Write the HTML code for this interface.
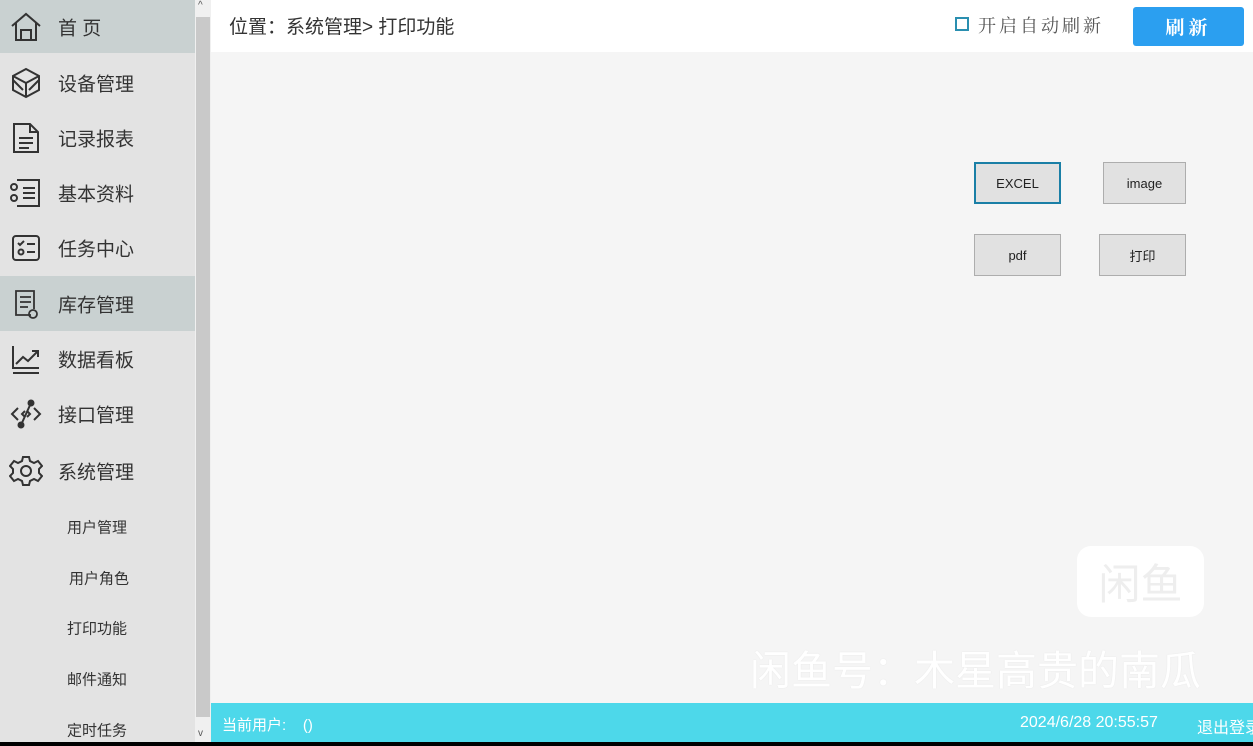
<!DOCTYPE html>
<html><head><meta charset="utf-8"><style>
*{margin:0;padding:0;box-sizing:border-box}
body{width:1253px;height:746px;overflow:hidden;background:#000;font-family:"Liberation Sans","Noto Sans CJK SC",sans-serif;position:relative}
.side{position:absolute;left:0;top:0;width:195px;height:742px;background:#e3e3e3}
.item{position:absolute;left:0;width:195px;height:55px;font-size:19px;color:#333}
.item.sel{background:#c9d1d1}
.item span{position:absolute;left:58px;top:50%;transform:translateY(-50%)}
.item svg{position:absolute;left:9px;top:50%;transform:translateY(-50%)}
.sub{position:absolute;left:67px;font-size:15px;color:#333;transform:translateY(-50%)}
.sb{position:absolute;left:195px;top:0;width:16px;height:742px;background:#f0f0f0}
.thumb{position:absolute;left:196px;top:17px;width:14px;height:700px;background:#c9c9c9}
.head{position:absolute;left:211px;top:0;width:1042px;height:52px;background:#fff}
.main{position:absolute;left:211px;top:52px;width:1042px;height:651px;background:#f5f5f5}
.btn{position:absolute;background:#e1e1e1;border:1px solid #adadad;font-size:13px;color:#222;display:flex;align-items:center;justify-content:center}
.foot{position:absolute;left:211px;top:703px;width:1042px;height:39px;background:#4dd8ea;color:#fff;font-size:15px}
</style></head><body>
<div class="side">
<div class="item sel" style="top:0;height:53px"><svg width="34" height="34" viewBox="0 0 34 34" fill="none" stroke="#333" stroke-width="2"><path d="M3 16L17 4l14 12M7 13v17h20V13M12 30V20h10v10"/></svg><span>首 页</span></div>
<div class="item" style="top:55px"><svg width="34" height="34" viewBox="0 0 34 34" fill="none" stroke="#333" stroke-width="2"><path d="M17 3l13 7v14l-13 7-13-7V10zM4 10l13 7 13-7M17 17v14M4 14l10 10M30 14l-10 10"/></svg><span>设备管理</span></div>
<div class="item" style="top:110px"><svg width="34" height="34" viewBox="0 0 34 34" fill="none" stroke="#333" stroke-width="2"><path d="M5 3h16l8 8v20H5zM21 3v8h8M10 17h14M10 22h14M10 27h10"/></svg><span>记录报表</span></div>
<div class="item" style="top:165px"><svg width="34" height="34" viewBox="0 0 34 34" fill="none" stroke="#333" stroke-width="2"><path d="M8 4h22v26H8M14 12h12M14 17h12M14 22h12"/><circle cx="5" cy="11" r="3"/><circle cx="5" cy="22" r="3"/></svg><span>基本资料</span></div>
<div class="item" style="top:220px"><svg width="34" height="34" viewBox="0 0 34 34" fill="none" stroke="#333" stroke-width="2"><rect x="4" y="5" width="26" height="24" rx="3"/><path d="M9 12l2 2 4-4M18 13h8M18 21h8"/><circle cx="12" cy="21" r="2.5"/></svg><span>任务中心</span></div>
<div class="item sel" style="top:276px"><svg width="34" height="34" viewBox="0 0 34 34" fill="none" stroke="#333" stroke-width="1.8"><path d="M22 28H7V4h18v18M11 10h11M11 15h11M11 20h8"/><circle cx="24" cy="27" r="4"/></svg><span>库存管理</span></div>
<div class="item" style="top:331px"><svg width="34" height="34" viewBox="0 0 34 34" fill="none" stroke="#333" stroke-width="2"><path d="M4 4v22h26M4 31h26M7 22l7-7 5 4 9-9M23 9h6v6"/></svg><span>数据看板</span></div>
<div class="item" style="top:386px"><svg width="34" height="34" viewBox="0 0 34 34" fill="none" stroke="#333" stroke-width="2"><path d="M9 11l-6 6 6 6M25 11l6 6-6 6M22 6L12 28M16 14l-3 3 3 3M18 14l3 3-3 3"/><circle cx="22" cy="6" r="2.5" fill="#333"/><circle cx="12" cy="28" r="2.5" fill="#333"/></svg><span>接口管理</span></div>
<div class="item" style="top:443px"><svg width="34" height="34" viewBox="0 0 34 34" fill="none" stroke="#333" stroke-width="2"><path d="M14 3h6l1 4 4 2 4-2 4 5-3 3v4l3 3-4 5-4-2-4 2-1 4h-6l-1-4-4-2-4 2-4-5 3-3v-4l-3-3 4-5 4 2 4-2z"/><circle cx="17" cy="17" r="5"/></svg><span>系统管理</span></div>
<div class="sub" style="top:527px">用户管理</div>
<div class="sub" style="top:578px;left:69px">用户角色</div>
<div class="sub" style="top:628px">打印功能</div>
<div class="sub" style="top:679px">邮件通知</div>
<div class="sub" style="top:730px">定时任务</div>
</div>
<div class="sb"></div><div class="thumb"></div>
<div style="position:absolute;left:198px;top:0;font-size:10px;color:#555">^</div>
<div style="position:absolute;left:198px;top:728px;font-size:10px;color:#555">v</div>
<div class="head">
<div style="position:absolute;left:18px;top:12px;font-size:19px;color:#333">位置：系统管理&gt; 打印功能</div>
<div style="position:absolute;left:744px;top:17px;width:14px;height:14px;border:2px solid #2a8fb0"></div>
<div style="position:absolute;left:767px;top:12px;font-size:18px;color:#555;letter-spacing:3px;font-family:'Noto Serif CJK SC',serif">开启自动刷新</div>
<div style="position:absolute;left:922px;top:7px;width:111px;height:39px;background:#2b9ff0;border-radius:3px;color:#fff;font-size:19px;font-weight:bold;display:flex;align-items:center;justify-content:center;letter-spacing:4px;font-family:'Noto Serif CJK SC',serif">刷新</div>
</div>
<div class="main">
<div class="btn" style="left:763px;top:110px;width:87px;height:42px;border:2px solid #1a7fa6">EXCEL</div>
<div class="btn" style="left:892px;top:110px;width:83px;height:42px">image</div>
<div class="btn" style="left:763px;top:182px;width:87px;height:42px">pdf</div>
<div class="btn" style="left:888px;top:182px;width:87px;height:42px">打印</div>
<div style="position:absolute;left:866px;top:494px;width:127px;height:71px;background:#fff;border-radius:14px;color:#eee;font-size:42px;display:flex;align-items:center;justify-content:center">闲鱼</div>
<div style="position:absolute;left:539px;top:585px;font-size:41px;color:#fff;text-shadow:0 0 1px #ddd;white-space:nowrap">闲鱼号：木星高贵的南瓜</div>
</div>
<div class="foot">
<div style="position:absolute;left:11px;top:11px">当前用户: &nbsp;&nbsp;&nbsp;()</div>
<div style="position:absolute;left:809px;top:11px;font-size:16px">2024/6/28 20:55:57</div>
<div style="position:absolute;left:986px;top:11px;white-space:nowrap;font-size:16px">退出登录</div>
</div>
</body></html>
